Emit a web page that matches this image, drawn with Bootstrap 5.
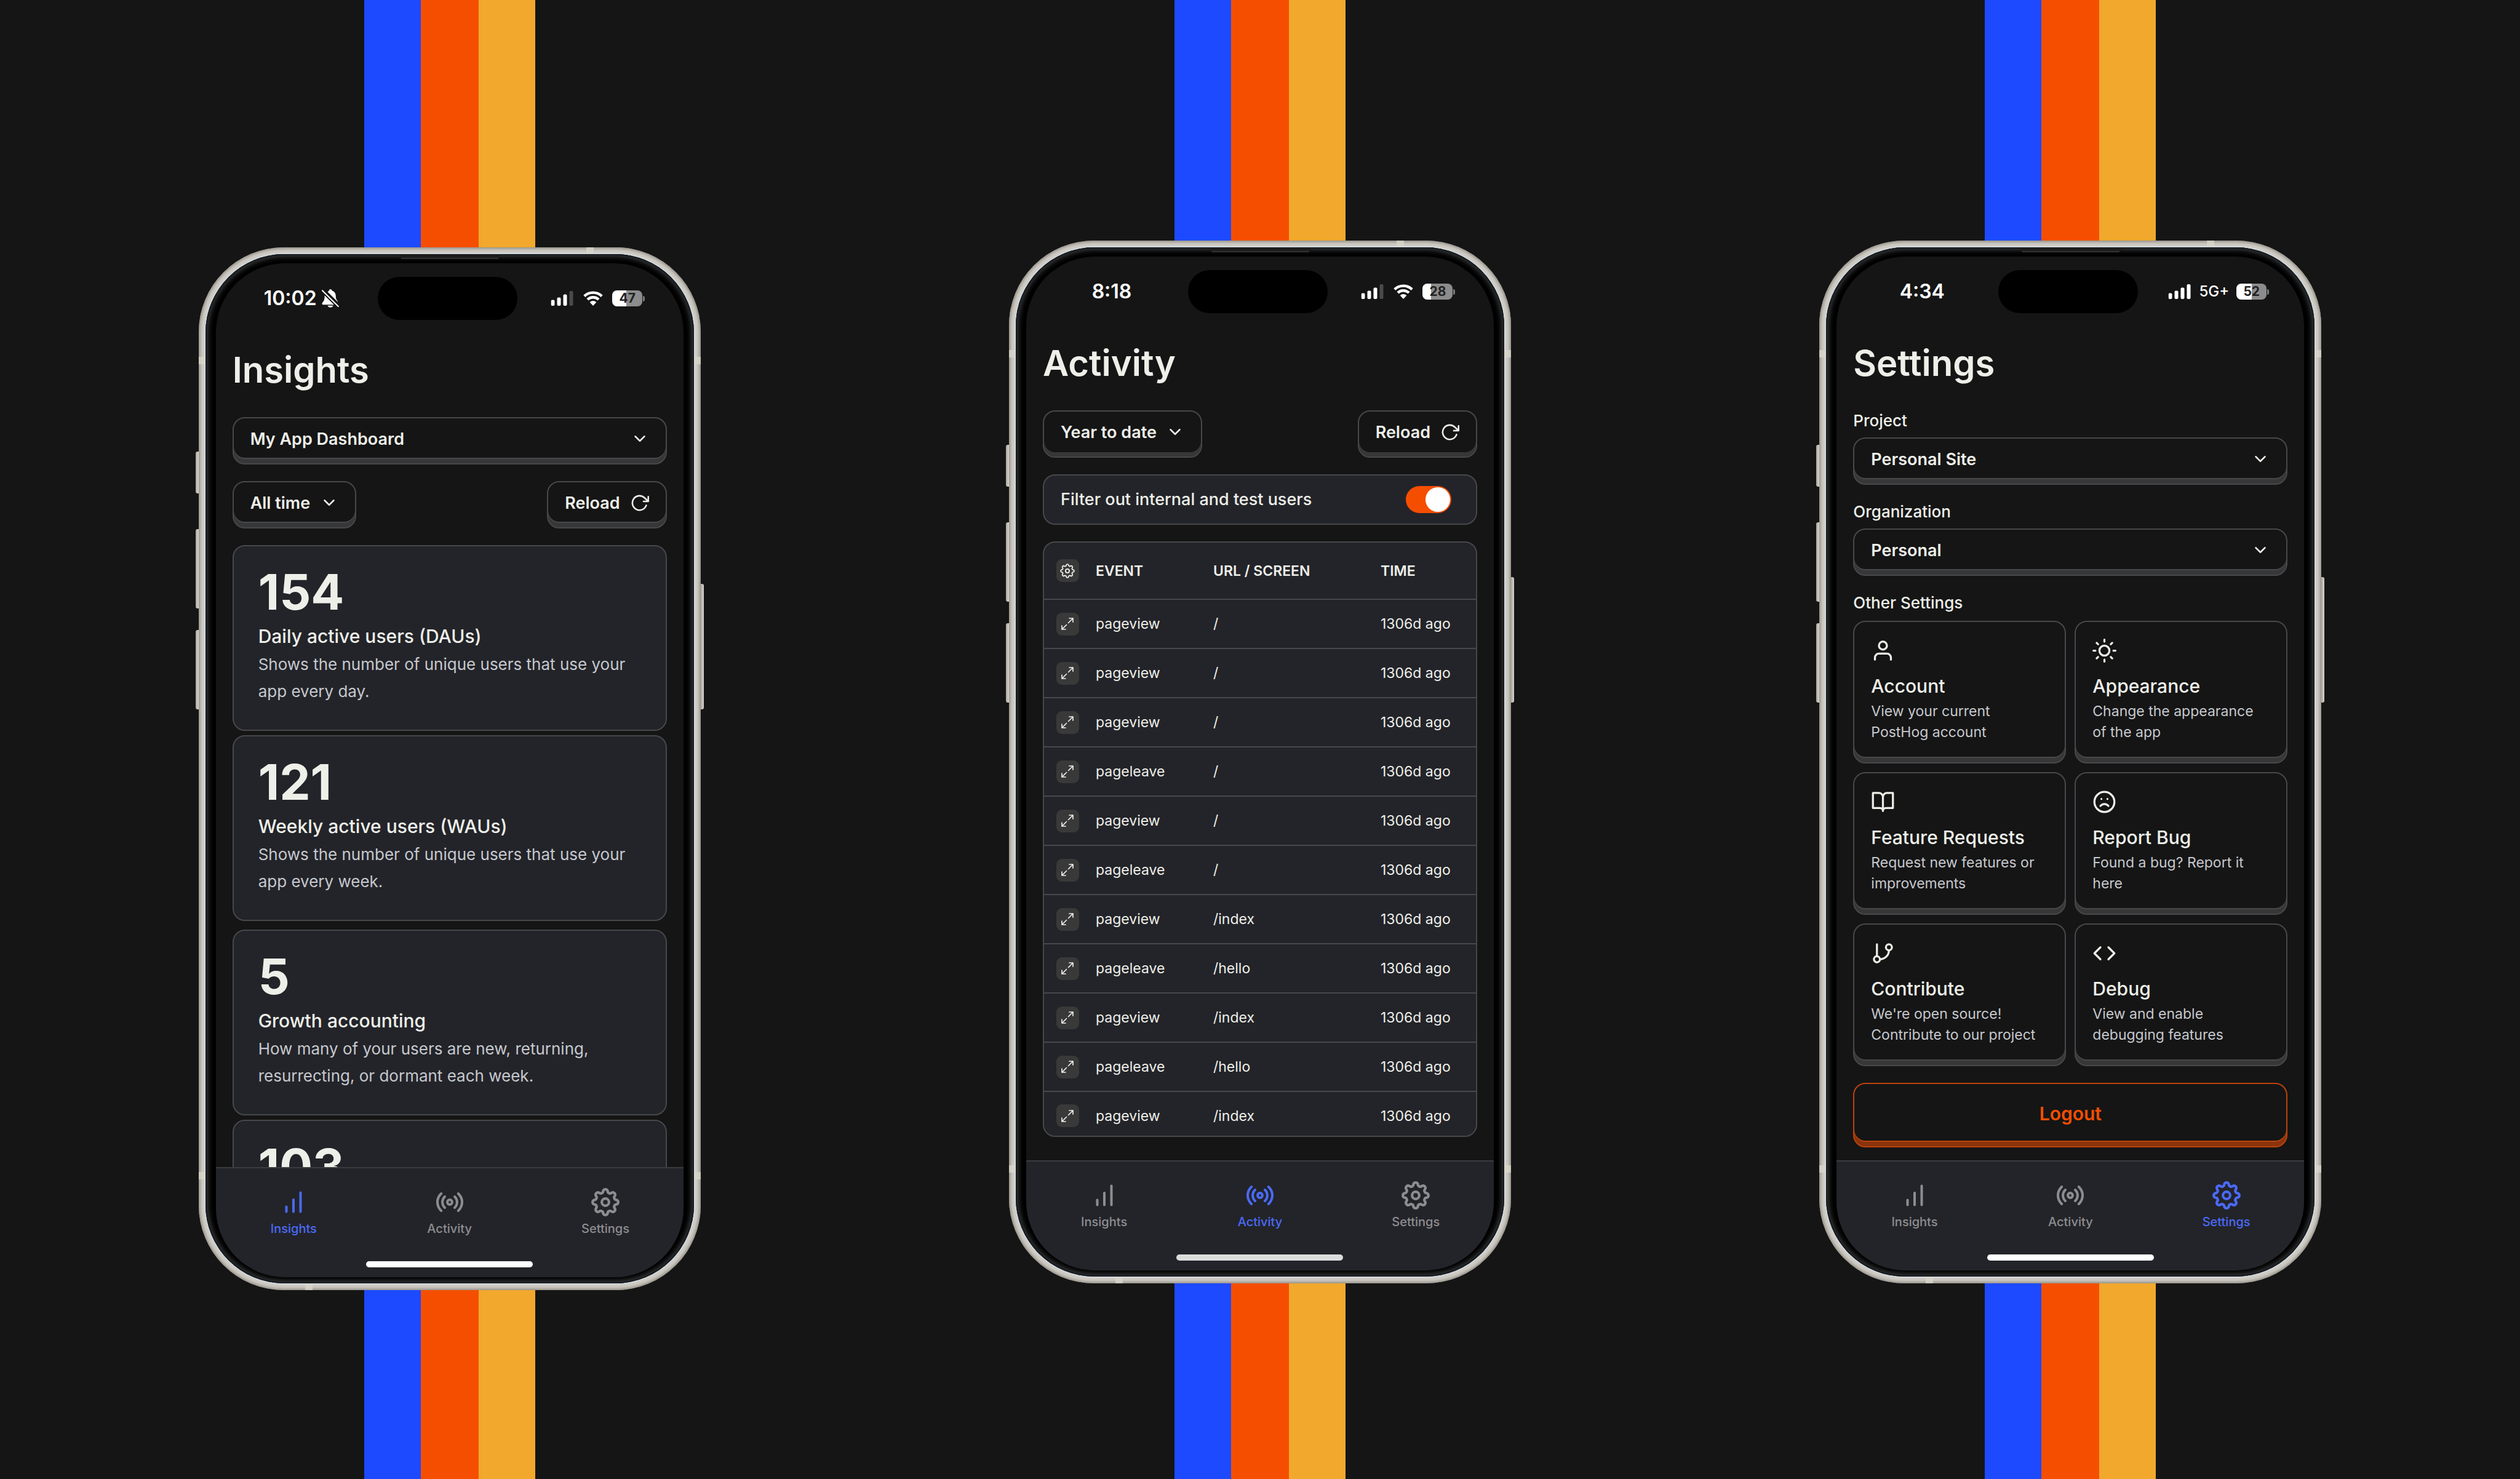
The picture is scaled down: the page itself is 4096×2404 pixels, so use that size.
<!DOCTYPE html>
<html lang="en">
<head>
<meta charset="utf-8">
<meta name="viewport" content="width=device-width, initial-scale=1">
<title>Insights, Activity and Settings</title>
<link href="https://cdn.jsdelivr.net/npm/bootstrap@5.3.0/dist/css/bootstrap.min.css" rel="stylesheet">
<style>
:root{--ink:#eeefe9;--soft:#c6c8ce;--bg:#151515;--panel:#232429;--line:#47484b;--lip:#373737;--blue:#1d4aff;--orange:#f54e00;--yellow:#f1a82c}
body{background:var(--bg);color:var(--ink);font-family:Inter,"Liberation Sans",sans-serif;font-size:26px;line-height:34px}
a{color:inherit;text-decoration:none}
.stage{padding:0 72px}
.lane{min-height:100vh}
.stripes{width:278px;flex:0 0 auto;background:linear-gradient(90deg,var(--blue) 92px,var(--orange) 92px 186px,var(--yellow) 186px)}
.stripes-top{height:391px}
.lane-low .stripes-top{height:402px}

/* device */
.device{width:100%;max-width:816px;aspect-ratio:816/1695;padding:11px;border-radius:138px;background:#cfccc5;box-shadow:inset 0 0 5px 2px #8b877f}
.bezel{background:#000;border-radius:128px;padding:15px 17px 10px;box-shadow:0 0 0 2px #d3d9dd,inset 0 0 0 2px #161b1f,inset 0 0 9px 4px #3d3e40}
.glass{background:var(--bg);border-radius:112px;overflow:hidden}
.key{position:absolute;width:5px;background:linear-gradient(90deg,#a9a49b,#d9d6ce);border-radius:3px 0 0 3px}
.key-l{left:-5px}.key-r{right:-5px;border-radius:0 3px 3px 0}
.band{position:absolute;background:#dad7cc;opacity:.75}
.band-v{width:11px;height:12px}.band-h{width:12px;height:11px}
.slit{position:absolute;top:11px;left:50%;width:167px;height:8px;margin-left:-83px;background:#1c1c1c;clip-path:polygon(0 0,100% 0,97% 100%,3% 100%);border-bottom:2px solid #333}
.island{position:absolute;top:22px;left:263px;width:227px;height:70px;border-radius:35px;background:#000}

/* status bar */
.status{height:114px;color:#fff}
.status-side{width:278px}
.clock{font-size:32px;font-weight:600}
.cell{font-size:24px;font-weight:500}
.battery{width:49px;height:26px;border-radius:8px;color:#222;font-size:21px;line-height:26px;font-weight:700;text-align:center}
.battery::after{content:"";position:absolute;left:50px;top:9px;width:3px;height:9px;border-radius:0 3px 3px 0;background:#7d7d7d}
.status-side:last-child{padding-right:4px}

/* shared controls */
.pane{padding:23px 27px 0;min-height:0;overflow:hidden}
.screen-title{font-size:58px;line-height:72px;font-weight:600;margin-bottom:41px}
.stack{gap:27px}
.keycap{height:77px;border:2px solid var(--line);border-radius:20px;background-color:var(--bg);color:var(--ink);font-size:27px;font-weight:600;line-height:34px;padding:0 27px 6px;box-shadow:inset 0 -7px 0 var(--lip),inset 0 -9px 0 var(--line)}
select.keycap{padding-right:72px;background-image:url("data:image/svg+xml,%3Csvg xmlns='http://www.w3.org/2000/svg' viewBox='0 0 24 24' fill='none' stroke='%23eeefe9' stroke-width='2' stroke-linecap='round' stroke-linejoin='round'%3E%3Cpath d='M6 9l6 6 6-6'/%3E%3C/svg%3E");background-size:30px;background-position:right 27px top 18px}
.plainlip .keycap{box-shadow:inset 0 -7px 0 var(--lip)}
.ico{fill:none;stroke:currentColor;stroke-width:2;stroke-linecap:round;stroke-linejoin:round;display:block;flex:none}
.ico-31{width:31px;height:31px}.ico-39{width:39px;height:39px}
.panel{background:var(--panel);border:2px solid var(--line);border-radius:20px}

/* insights */
.metric{padding:40px}
.metric-num{font-size:80px;line-height:68px;font-weight:700;margin-bottom:18px}
.metric-name{font-size:30px;line-height:40px;font-weight:500;margin-bottom:4px}
.metric-text{line-height:44px;color:var(--soft);margin:0}

/* activity */
.filter{height:82px;padding:0 40px 0 27px;font-size:27px;font-weight:500}
.form-switch .toggle{width:74px;height:44px;margin:0;border:0;border-radius:22px;float:none}
.form-switch .toggle:checked{background-color:var(--orange);background-image:url("data:image/svg+xml,%3Csvg xmlns='http://www.w3.org/2000/svg' viewBox='-22 -22 44 44'%3E%3Ccircle r='20' fill='%23fff'/%3E%3C/svg%3E")}
.events{margin:0;table-layout:fixed;font-size:23px;--bs-table-bg:transparent;--bs-table-color:var(--ink)}
.events th,.events td{height:80px;padding:0;border-bottom:2px solid var(--line);vertical-align:middle;white-space:nowrap}
.events th{height:92px;font-weight:600}
.events th:first-child,.events td:first-child{padding-left:20px}
.events tbody tr:last-child td{height:72px;padding-top:6px;border:0}
.c1{width:84px}.c2{width:191px}.c3{width:272px}
.mini{width:37px;height:37px;border:0;border-radius:9px;background:#393939;color:var(--ink);padding:0}
.mini svg{width:24px;height:24px;stroke-width:1.7}

/* settings */
.field-name{font-size:26px;line-height:34px;font-weight:500;margin-bottom:10px}
h2.field-name{margin-bottom:12px}
.tiles{--bs-gutter-x:14px;--bs-gutter-y:14px}
.tile{height:auto;padding:27px 27px 32px;font-weight:400}
.tile-name{font-size:30px;line-height:36px;font-weight:500;margin:20px 0 6px}
.tile-text{font-size:23px;line-height:34px;color:var(--soft);margin:0}
.logout{height:105px;border-color:#b9430c;color:var(--orange);font-size:30px;box-shadow:inset 0 -7px 0 #8a330d,inset 0 -9px 0 #b9430c}

/* tab bar */
.tabs{height:179px;border-top:2px solid #3b3c40;background:var(--panel);color:#8d8d91}
.tabs-row{padding-top:32px}
.tab{flex:1;gap:8px;font-size:20px;line-height:24px;font-weight:500}
.tab svg{width:46px;height:46px}
.tab-on{color:#4a6af8}
.homebar{width:271px;height:10px;border-radius:5px;background:#fff;margin:41px auto 0}
.lane-dim .homebar{background:#dcdcdc}
</style>
<script src="https://cdn.jsdelivr.net/npm/bootstrap@5.3.0/dist/js/bootstrap.bundle.min.js"></script>
</head>
<body>
<svg class="d-none" xmlns="http://www.w3.org/2000/svg">
  <symbol id="gear" viewBox="1 1 22 22"><path d="M10.26 3.27A1.85 1.85 0 0 1 13.74 3.27A1.85 1.85 0 0 0 16.94 4.6A1.85 1.85 0 0 1 19.4 7.06A1.85 1.85 0 0 0 20.73 10.26A1.85 1.85 0 0 1 20.73 13.74A1.85 1.85 0 0 0 19.4 16.94A1.85 1.85 0 0 1 16.94 19.4A1.85 1.85 0 0 0 13.74 20.73A1.85 1.85 0 0 1 10.26 20.73A1.85 1.85 0 0 0 7.06 19.4A1.85 1.85 0 0 1 4.6 16.94A1.85 1.85 0 0 0 3.27 13.74A1.85 1.85 0 0 1 3.27 10.26A1.85 1.85 0 0 0 4.6 7.06A1.85 1.85 0 0 1 7.06 4.6A1.85 1.85 0 0 0 10.26 3.27Z"/><circle cx="12" cy="12" r="2.8"/></symbol>
  <symbol id="bars" viewBox="0 0 46 46"><path stroke-width="4" d="M11.5 30.5v8M23 19v19.5M34.500 7.500v31"/></symbol>
  <symbol id="cast" viewBox="0 0 46 46"><g stroke-width="4"><circle cx="23" cy="23" r="3.900"/><path d="M9.200 9C.9 17 .9 29 9.200 37M36.800 9C45.100 17 45.100 29 36.800 37M15 14C9.800 19 9.800 27 15 32M31 14C36.200 19 36.200 27 31 32"/></g></symbol>
  <symbol id="reload" viewBox="0 0 24 24"><path d="M23 4v6h-6M20.490 15a9 9 0 1 1-2.120-9.360L23 10"/></symbol>
  <symbol id="expand" viewBox="0 0 24 24"><path d="M15 3h6v6M21 3l-7.500 7.500M9 21H3v-6M3 21l7.500-7.500"/></symbol>
  <symbol id="user" viewBox="0 0 24 24"><path d="M20 21v-2a4 4 0 0 0-4-4H8a4 4 0 0 0-4 4v2"/><circle cx="12" cy="7" r="4"/></symbol>
  <symbol id="sun" viewBox="0 0 24 24"><circle cx="12" cy="12" r="5"/><path d="M12 1v2M12 21v2M4.220 4.220l1.420 1.420M18.360 18.360l1.420 1.420M1 12h2M21 12h2M4.220 19.780l1.420-1.420M18.360 5.640l1.420-1.420"/></symbol>
  <symbol id="book" viewBox="0 0 24 24"><path d="M2 3h6a4 4 0 0 1 4 4v14a3 3 0 0 0-3-3H2zM22 3h-6a4 4 0 0 0-4 4v14a3 3 0 0 1 3-3h7z"/></symbol>
  <symbol id="frown" viewBox="0 0 24 24"><circle cx="12" cy="12" r="10"/><path d="M16 16s-1.500-2-4-2-4 2-4 2M9 9h.01M15 9h.01"/></symbol>
  <symbol id="branch" viewBox="0 0 24 24"><path d="M6 3v12M18 9a9 9 0 0 1-9 9"/><circle cx="18" cy="6" r="3"/><circle cx="6" cy="18" r="3"/></symbol>
  <symbol id="code" viewBox="0 0 24 24"><path d="M16 18l6-6-6-6M8 6l-6 6 6 6"/></symbol>
  <symbol id="signal" viewBox="0 0 37 24"><rect y="14.500" width="6" height="9.500" rx="2"/><rect x="10" y="10.500" width="6" height="13.500" rx="2"/><rect x="20" y="5.500" width="6" height="18.500" rx="2"/></symbol>
  <symbol id="wifi" viewBox="0 0 34 24"><path d="M2.800 8.300A20.600 20.600 0 0 1 31.200 8.300M8 13.900A13 13 0 0 1 26 13.900" fill="none" stroke="#fff" stroke-width="4.400"/><path d="M17 24l-5.400-5.800a7.700 7.700 0 0 1 10.800 0z"/></symbol>
</svg>

<main class="stage">
<div class="row g-0">

<!-- Insights -->
<section class="col lane lane-low d-flex flex-column align-items-center">
  <div class="stripes stripes-top"></div>
  <div class="device position-relative">
    <i class="key key-l" style="top:332px;height:68px"></i><i class="key key-l" style="top:458px;height:129px"></i><i class="key key-l" style="top:622px;height:129px"></i><i class="key key-r" style="top:547px;height:204px"></i>
    <i class="band band-v" style="left:0;top:178px"></i><i class="band band-v" style="right:0;top:178px"></i><i class="band band-v" style="left:0;top:1503px"></i><i class="band band-v" style="right:0;top:1503px"></i><i class="band band-h" style="left:630px;top:0"></i><i class="band band-h" style="left:173px;bottom:0"></i>
    <div class="bezel h-100">
      <i class="slit"></i>
      <div class="glass h-100 d-flex flex-column position-relative">
        <div class="island"></div>
        <div class="status d-flex flex-shrink-0 justify-content-between align-items-center">
          <div class="status-side d-flex justify-content-center align-items-center gap-2">
            <span class="clock">10:02</span>
            <svg width="28" height="30" viewBox="0 0 28 30" fill="#fff"><path d="M9.500 4.500C10.800 3.300 11.300 3 11.800 2.600 12 .9 13 .3 14.200 .3s2.200.6 2.400 2.300c4.200 1.200 6.200 4.600 6.200 9.200 0 3.400 1 5.300 2.700 7.300.5.600.6 1.100.5 1.700z"/><path d="M4.600 10.300L20 25.200H2.200c-1.500 0-2.300-1.800-1.200-3.200 2.300-2.600 3.800-4 3.600-11.700z"/><path d="M.9 2.200L26.800 28" stroke="#fff" stroke-width="2" stroke-linecap="round"/><path d="M9.500 26.800h9c-.6 1.900-2.400 3-4.500 3s-3.900-1.100-4.500-3z"/></svg>
          </div>
          <div class="status-side d-flex justify-content-center align-items-center">
            <svg width="38" height="24" viewBox="0 0 37 24" fill="#fff"><use href="#signal"/><rect x="30" width="6" height="24" rx="2" fill="#4a4a4a"/></svg>
            <svg class="ms-2" width="46" height="24" viewBox="-3 0 40 24" fill="#fff"><use href="#wifi" width="34" height="24"/></svg>
            <span class="battery position-relative ms-2" style="background:linear-gradient(90deg,#fff 47%,#8c8c8c 47%)">47</span>
          </div>
        </div>
        <div class="pane flex-grow-1">
          <h1 class="screen-title">Insights</h1>
          <div class="d-flex flex-column stack">
            <select class="form-select keycap" aria-label="Dashboard"><option>My App Dashboard</option></select>
            <div class="d-flex justify-content-between">
              <select class="form-select keycap w-auto" aria-label="Date range"><option>All time</option></select>
              <button type="button" class="keycap d-flex align-items-center gap-3">Reload <svg class="ico ico-31"><use href="#reload"/></svg></button>
            </div>
            <div class="d-grid" style="gap:14px">
              <div class="d-grid" style="gap:7px">
                <article class="panel metric"><div class="metric-num">154</div><h2 class="metric-name">Daily active users (DAUs)</h2><p class="metric-text">Shows the number of unique users that use your app every day.</p></article>
                <article class="panel metric"><div class="metric-num">121</div><h2 class="metric-name">Weekly active users (WAUs)</h2><p class="metric-text">Shows the number of unique users that use your app every week.</p></article>
              </div>
              <div class="d-grid" style="gap:7px">
                <article class="panel metric"><div class="metric-num">5</div><h2 class="metric-name">Growth accounting</h2><p class="metric-text">How many of your users are new, returning, resurrecting, or dormant each week.</p></article>
                <article class="panel metric"><div class="metric-num">103</div></article>
              </div>
            </div>
          </div>
        </div>
        <nav class="tabs flex-shrink-0">
          <div class="tabs-row d-flex">
            <a href="#" class="tab tab-on d-flex flex-column align-items-center"><svg class="ico"><use href="#bars"/></svg>Insights</a>
            <a href="#" class="tab d-flex flex-column align-items-center"><svg class="ico"><use href="#cast"/></svg>Activity</a>
            <a href="#" class="tab d-flex flex-column align-items-center"><svg class="ico"><use href="#gear"/></svg>Settings</a>
          </div>
          <div class="homebar"></div>
        </nav>
      </div>
    </div>
  </div>
  <div class="stripes flex-grow-1"></div>
</section>

<!-- Activity -->
<section class="col lane lane-dim plainlip d-flex flex-column align-items-center">
  <div class="stripes stripes-top"></div>
  <div class="device position-relative">
    <i class="key key-l" style="top:332px;height:68px"></i><i class="key key-l" style="top:458px;height:129px"></i><i class="key key-l" style="top:622px;height:129px"></i><i class="key key-r" style="top:547px;height:204px"></i>
    <i class="band band-v" style="left:0;top:178px"></i><i class="band band-v" style="right:0;top:178px"></i><i class="band band-v" style="left:0;top:1503px"></i><i class="band band-v" style="right:0;top:1503px"></i><i class="band band-h" style="left:630px;top:0"></i><i class="band band-h" style="left:173px;bottom:0"></i>
    <div class="bezel h-100">
      <i class="slit"></i>
      <div class="glass h-100 d-flex flex-column position-relative">
        <div class="island"></div>
        <div class="status d-flex flex-shrink-0 justify-content-between align-items-center">
          <div class="status-side d-flex justify-content-center align-items-center"><span class="clock">8:18</span></div>
          <div class="status-side d-flex justify-content-center align-items-center">
            <svg width="38" height="24" viewBox="0 0 37 24" fill="#fff"><use href="#signal"/><rect x="30" width="6" height="24" rx="2" fill="#4a4a4a"/></svg>
            <svg class="ms-2" width="46" height="24" viewBox="-3 0 40 24" fill="#fff"><use href="#wifi" width="34" height="24"/></svg>
            <span class="battery position-relative ms-2" style="background:linear-gradient(90deg,#fff 28%,#8c8c8c 28%)">28</span>
          </div>
        </div>
        <div class="pane flex-grow-1">
          <h1 class="screen-title">Activity</h1>
          <div class="d-flex flex-column stack">
            <div class="d-flex justify-content-between">
              <select class="form-select keycap w-auto" aria-label="Date range"><option>Year to date</option></select>
              <button type="button" class="keycap d-flex align-items-center gap-3">Reload <svg class="ico ico-31"><use href="#reload"/></svg></button>
            </div>
            <div class="panel filter form-switch d-flex justify-content-between align-items-center">
              <label for="internal">Filter out internal and test users</label>
              <input class="form-check-input toggle" type="checkbox" role="switch" id="internal" checked>
            </div>
            <div class="panel overflow-hidden">
              <table class="table events">
                <colgroup><col class="c1"><col class="c2"><col class="c3"><col></colgroup>
                <thead><tr><th><button type="button" class="mini d-flex align-items-center justify-content-center" aria-label="Columns"><svg class="ico"><use href="#gear"/></svg></button></th><th>EVENT</th><th>URL / SCREEN</th><th>TIME</th></tr></thead>
                <tbody>
                <tr><td><button type="button" class="mini d-flex align-items-center justify-content-center" aria-label="Expand"><svg class="ico"><use href="#expand"/></svg></button></td><td>pageview</td><td>/</td><td>1306d ago</td></tr>
                <tr><td><button type="button" class="mini d-flex align-items-center justify-content-center" aria-label="Expand"><svg class="ico"><use href="#expand"/></svg></button></td><td>pageview</td><td>/</td><td>1306d ago</td></tr>
                <tr><td><button type="button" class="mini d-flex align-items-center justify-content-center" aria-label="Expand"><svg class="ico"><use href="#expand"/></svg></button></td><td>pageview</td><td>/</td><td>1306d ago</td></tr>
                <tr><td><button type="button" class="mini d-flex align-items-center justify-content-center" aria-label="Expand"><svg class="ico"><use href="#expand"/></svg></button></td><td>pageleave</td><td>/</td><td>1306d ago</td></tr>
                <tr><td><button type="button" class="mini d-flex align-items-center justify-content-center" aria-label="Expand"><svg class="ico"><use href="#expand"/></svg></button></td><td>pageview</td><td>/</td><td>1306d ago</td></tr>
                <tr><td><button type="button" class="mini d-flex align-items-center justify-content-center" aria-label="Expand"><svg class="ico"><use href="#expand"/></svg></button></td><td>pageleave</td><td>/</td><td>1306d ago</td></tr>
                <tr><td><button type="button" class="mini d-flex align-items-center justify-content-center" aria-label="Expand"><svg class="ico"><use href="#expand"/></svg></button></td><td>pageview</td><td>/index</td><td>1306d ago</td></tr>
                <tr><td><button type="button" class="mini d-flex align-items-center justify-content-center" aria-label="Expand"><svg class="ico"><use href="#expand"/></svg></button></td><td>pageleave</td><td>/hello</td><td>1306d ago</td></tr>
                <tr><td><button type="button" class="mini d-flex align-items-center justify-content-center" aria-label="Expand"><svg class="ico"><use href="#expand"/></svg></button></td><td>pageview</td><td>/index</td><td>1306d ago</td></tr>
                <tr><td><button type="button" class="mini d-flex align-items-center justify-content-center" aria-label="Expand"><svg class="ico"><use href="#expand"/></svg></button></td><td>pageleave</td><td>/hello</td><td>1306d ago</td></tr>
                <tr><td><button type="button" class="mini d-flex align-items-center justify-content-center" aria-label="Expand"><svg class="ico"><use href="#expand"/></svg></button></td><td>pageview</td><td>/index</td><td>1306d ago</td></tr>
                </tbody>
              </table>
            </div>
          </div>
        </div>
        <nav class="tabs flex-shrink-0">
          <div class="tabs-row d-flex">
            <a href="#" class="tab d-flex flex-column align-items-center"><svg class="ico"><use href="#bars"/></svg>Insights</a>
            <a href="#" class="tab tab-on d-flex flex-column align-items-center"><svg class="ico"><use href="#cast"/></svg>Activity</a>
            <a href="#" class="tab d-flex flex-column align-items-center"><svg class="ico"><use href="#gear"/></svg>Settings</a>
          </div>
          <div class="homebar"></div>
        </nav>
      </div>
    </div>
  </div>
  <div class="stripes flex-grow-1"></div>
</section>

<!-- Settings -->
<section class="col lane d-flex flex-column align-items-center">
  <div class="stripes stripes-top"></div>
  <div class="device position-relative">
    <i class="key key-l" style="top:332px;height:68px"></i><i class="key key-l" style="top:458px;height:129px"></i><i class="key key-l" style="top:622px;height:129px"></i><i class="key key-r" style="top:547px;height:204px"></i>
    <i class="band band-v" style="left:0;top:178px"></i><i class="band band-v" style="right:0;top:178px"></i><i class="band band-v" style="left:0;top:1503px"></i><i class="band band-v" style="right:0;top:1503px"></i><i class="band band-h" style="left:630px;top:0"></i><i class="band band-h" style="left:173px;bottom:0"></i>
    <div class="bezel h-100">
      <i class="slit"></i>
      <div class="glass h-100 d-flex flex-column position-relative">
        <div class="island"></div>
        <div class="status d-flex flex-shrink-0 justify-content-between align-items-center">
          <div class="status-side d-flex justify-content-center align-items-center"><span class="clock">4:34</span></div>
          <div class="status-side d-flex justify-content-center align-items-center">
            <svg width="38" height="24" viewBox="0 0 37 24" fill="#fff"><use href="#signal"/><rect x="30" width="6" height="24" rx="2"/></svg>
            <span class="cell mx-2 px-1">5G+</span>
            <span class="battery position-relative" style="background:linear-gradient(90deg,#fff 52%,#8c8c8c 52%)">52</span>
          </div>
        </div>
        <div class="pane flex-grow-1">
          <h1 class="screen-title">Settings</h1>
          <div class="d-flex flex-column stack">
            <div><label class="field-name d-block" for="project">Project</label><select class="form-select keycap" id="project"><option>Personal Site</option></select></div>
            <div><label class="field-name d-block" for="org">Organization</label><select class="form-select keycap" id="org"><option>Personal</option></select></div>
            <div>
              <h2 class="field-name">Other Settings</h2>
              <div class="row row-cols-2 tiles">
                <div class="col"><a href="#" class="keycap tile d-block"><svg class="ico ico-39"><use href="#user"/></svg><h3 class="tile-name">Account</h3><p class="tile-text">View your current PostHog account</p></a></div>
                <div class="col"><a href="#" class="keycap tile d-block"><svg class="ico ico-39"><use href="#sun"/></svg><h3 class="tile-name">Appearance</h3><p class="tile-text">Change the appearance of the app</p></a></div>
                <div class="col"><a href="#" class="keycap tile d-block"><svg class="ico ico-39"><use href="#book"/></svg><h3 class="tile-name">Feature Requests</h3><p class="tile-text">Request new features or improvements</p></a></div>
                <div class="col"><a href="#" class="keycap tile d-block"><svg class="ico ico-39"><use href="#frown"/></svg><h3 class="tile-name">Report Bug</h3><p class="tile-text">Found a bug? Report it here</p></a></div>
                <div class="col"><a href="#" class="keycap tile d-block"><svg class="ico ico-39"><use href="#branch"/></svg><h3 class="tile-name">Contribute</h3><p class="tile-text">We're open source! Contribute to our project</p></a></div>
                <div class="col"><a href="#" class="keycap tile d-block"><svg class="ico ico-39"><use href="#code"/></svg><h3 class="tile-name">Debug</h3><p class="tile-text">View and enable debugging features</p></a></div>
              </div>
            </div>
            <button type="button" class="keycap logout w-100">Logout</button>
          </div>
        </div>
        <nav class="tabs flex-shrink-0">
          <div class="tabs-row d-flex">
            <a href="#" class="tab d-flex flex-column align-items-center"><svg class="ico"><use href="#bars"/></svg>Insights</a>
            <a href="#" class="tab d-flex flex-column align-items-center"><svg class="ico"><use href="#cast"/></svg>Activity</a>
            <a href="#" class="tab tab-on d-flex flex-column align-items-center"><svg class="ico"><use href="#gear"/></svg>Settings</a>
          </div>
          <div class="homebar"></div>
        </nav>
      </div>
    </div>
  </div>
  <div class="stripes flex-grow-1"></div>
</section>

</div>
</main>
</body>
</html>
